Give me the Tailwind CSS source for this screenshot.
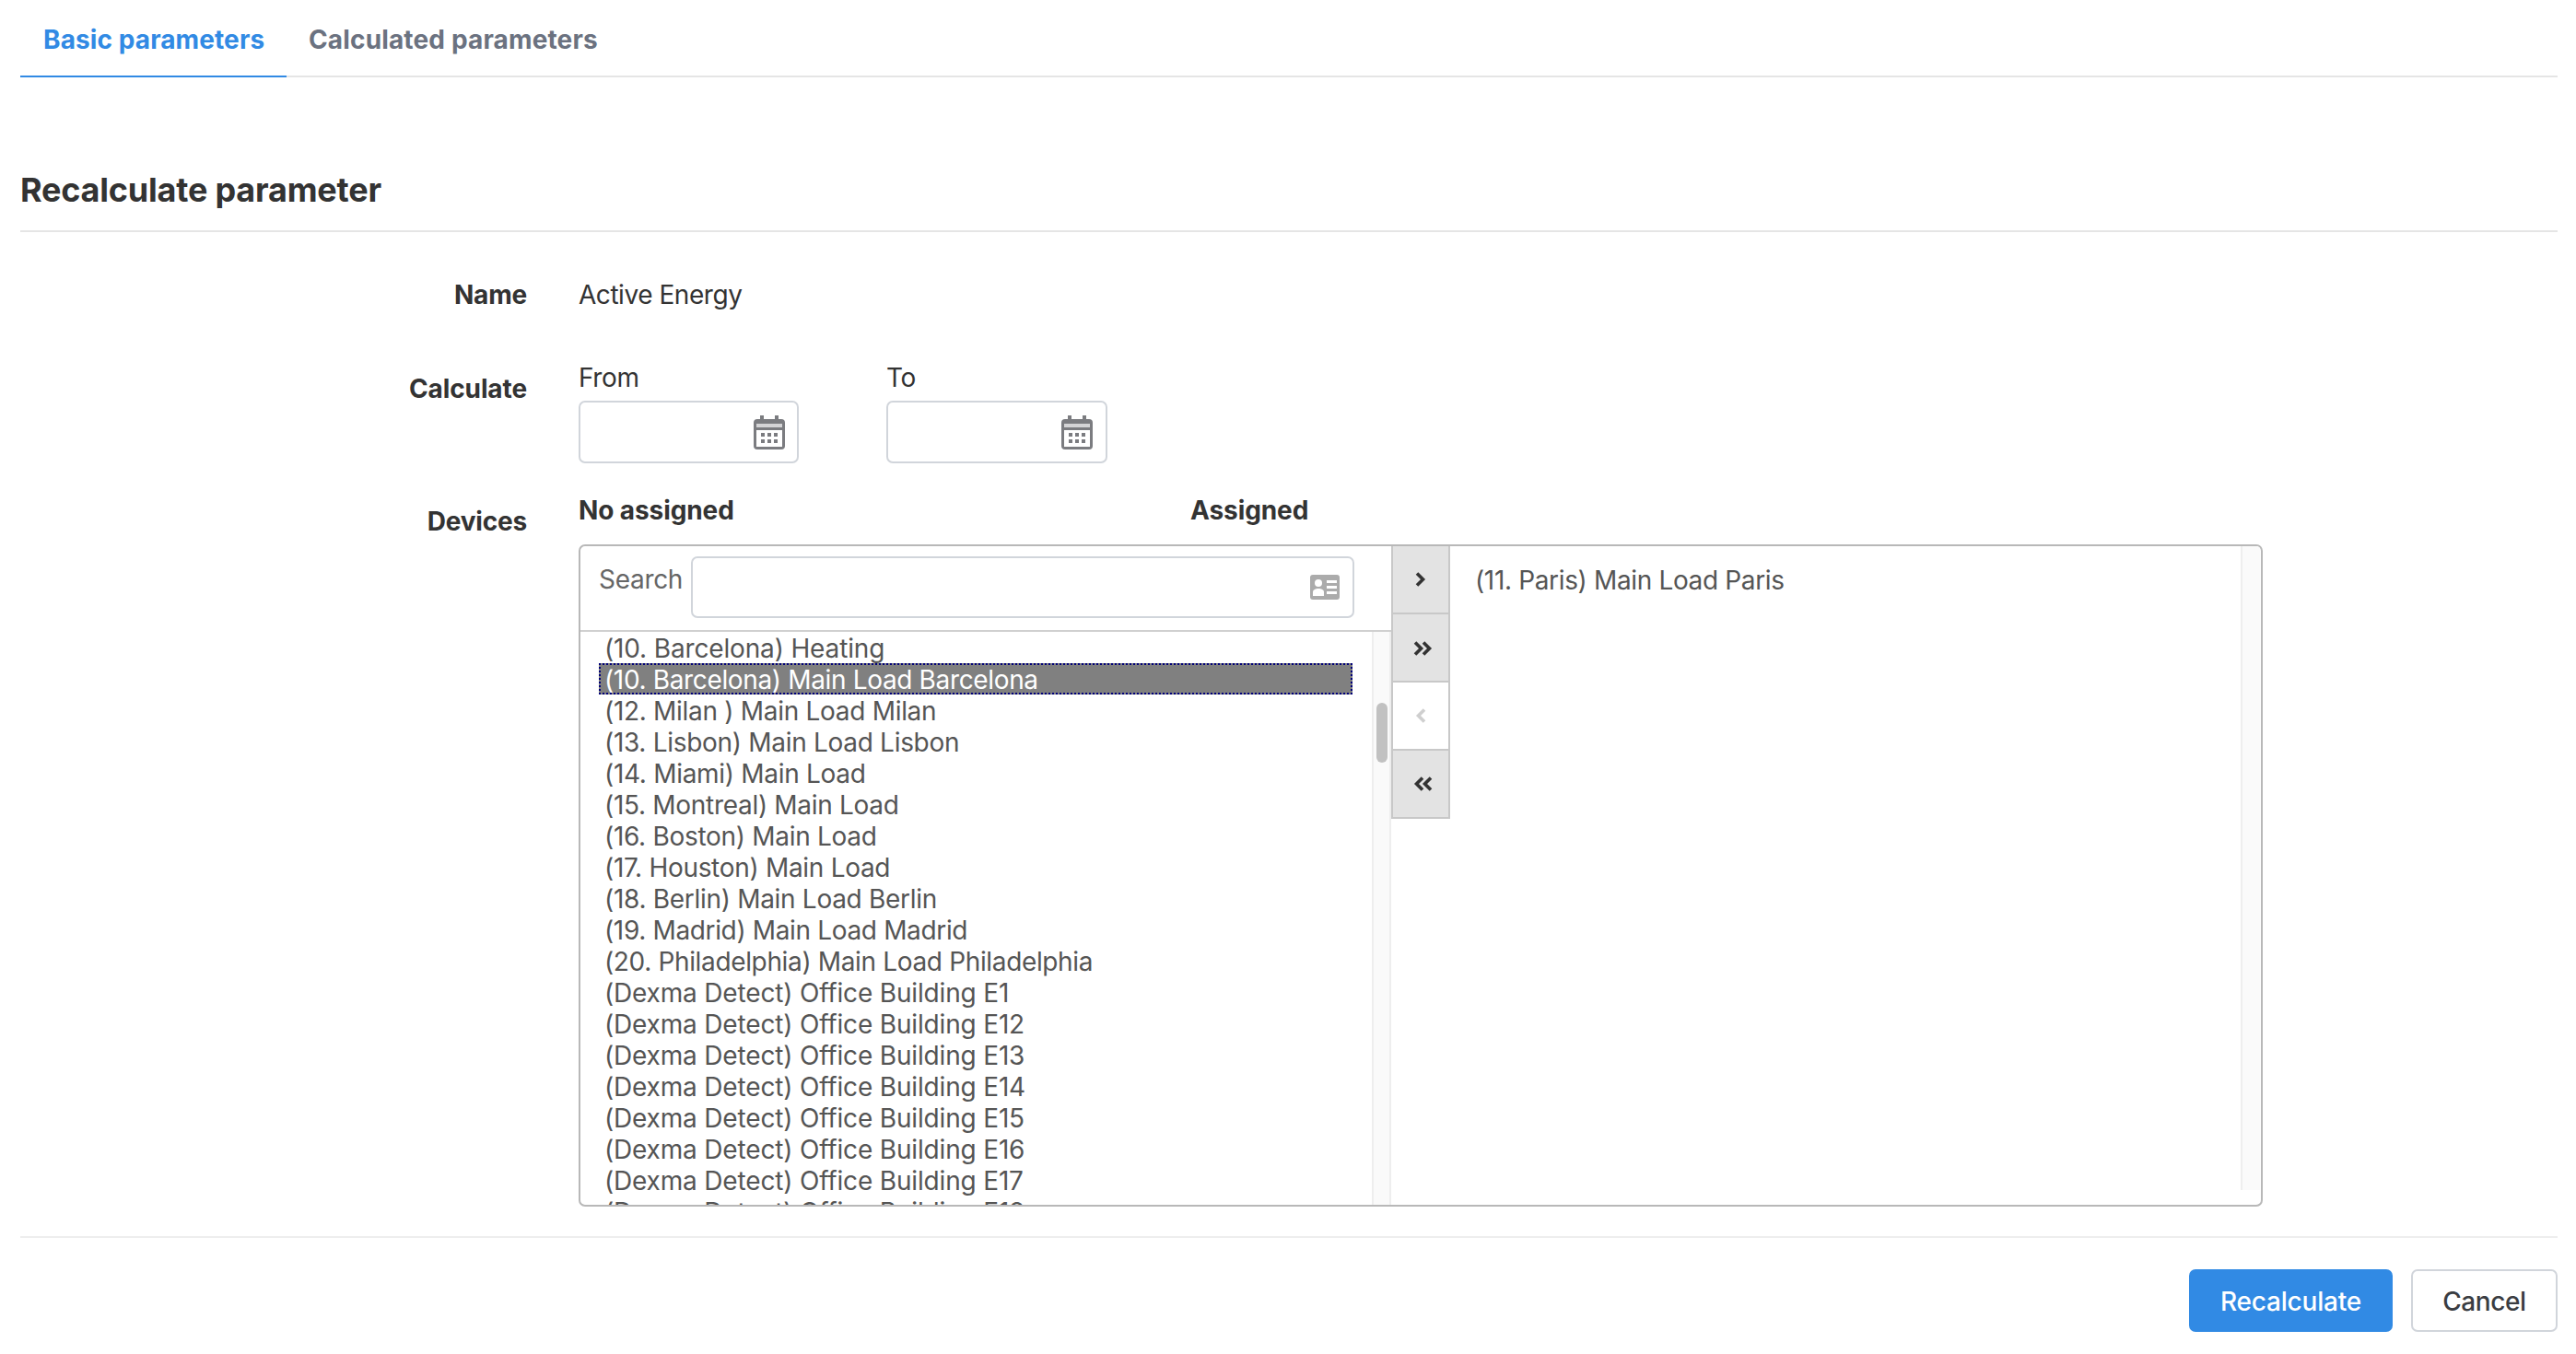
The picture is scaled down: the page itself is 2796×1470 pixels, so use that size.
<!DOCTYPE html>
<html lang="en">
<head>
<meta charset="utf-8">
<title>Recalculate parameter</title>
<script src="https://cdn.jsdelivr.net/npm/@tailwindcss/browser@4"></script>
</head>
<body class="bg-white font-['Inter',sans-serif] text-[#333] text-[28px]">
<div class="w-[2796px] h-[1470px] overflow-hidden px-[20px] flex flex-col">
  <div class="w-[2754px] ml-[2px] h-[84px] border-b-2 border-[#e5e5e5] flex text-[28px] font-bold">
    <div class="h-[84px] w-[289px] border-b-2 border-[#318ae4] text-[#318ae4] pl-[25px] leading-[86px] tracking-[0.1px]">Basic parameters</div>
    <div class="h-[82px] pl-[24px] text-[#6b7280] leading-[86px] tracking-[0.15px]">Calculated parameters</div>
  </div>

  <h2 class="w-[2754px] ml-[2px] mt-[84px] h-[84px] border-b-2 border-[#e5e5e5] text-[36px] font-bold leading-[76px] tracking-[-0.2px]">Recalculate parameter</h2>

  <div class="mt-[48px] flex h-[40px] leading-[40px]">
    <div class="w-[552px] text-right font-bold tracking-[-0.2px]">Name</div>
    <div class="ml-[56px] tracking-[-0.45px]">Active Energy</div>
  </div>

  <div class="mt-[50px] flex">
    <div class="w-[552px] text-right font-bold pt-[12px] leading-[40px] tracking-[-0.1px]">Calculate</div>
    <div class="ml-[56px] flex gap-[95px] tracking-[-0.35px]">
      <div>
        <div class="leading-[40px]">From</div>
        <div class="mt-[5px] w-[239px] h-[68px] border-2 border-[#d1d5db] rounded-[7px] flex items-center justify-end pr-[13px]">
          <svg class="w-[34px] h-[37px]" viewBox="0 0 34 37"><rect x="0" y="4" width="34" height="33" rx="4" fill="#7b7c80"/><rect x="7" y="0" width="4" height="8" fill="#7b7c80"/><rect x="23" y="0" width="4" height="8" fill="#7b7c80"/><rect x="3" y="9" width="28" height="4" fill="#d4d4d6"/><rect x="3" y="16" width="28" height="18" fill="#fff"/><g fill="#7b7c80"><rect x="8" y="19" width="4" height="4"/><rect x="15" y="19" width="4" height="4"/><rect x="22" y="19" width="4" height="4"/><rect x="8" y="26" width="4" height="4"/><rect x="15" y="26" width="4" height="4"/><rect x="22" y="26" width="4" height="4"/></g></svg>
        </div>
      </div>
      <div>
        <div class="leading-[40px]">To</div>
        <div class="mt-[5px] w-[240px] h-[68px] border-2 border-[#d1d5db] rounded-[7px] flex items-center justify-end pr-[14px]">
          <svg class="w-[34px] h-[37px]" viewBox="0 0 34 37"><rect x="0" y="4" width="34" height="33" rx="4" fill="#7b7c80"/><rect x="7" y="0" width="4" height="8" fill="#7b7c80"/><rect x="23" y="0" width="4" height="8" fill="#7b7c80"/><rect x="3" y="9" width="28" height="4" fill="#d4d4d6"/><rect x="3" y="16" width="28" height="18" fill="#fff"/><g fill="#7b7c80"><rect x="8" y="19" width="4" height="4"/><rect x="15" y="19" width="4" height="4"/><rect x="22" y="19" width="4" height="4"/><rect x="8" y="26" width="4" height="4"/><rect x="15" y="26" width="4" height="4"/><rect x="22" y="26" width="4" height="4"/></g></svg>
        </div>
      </div>
    </div>
  </div>

  <div class="mt-[31px] flex">
    <div class="w-[552px] text-right font-bold pt-[12px] leading-[40px] tracking-[-0.2px]">Devices</div>
    <div class="ml-[56px]">
      <div class="flex h-[40px] leading-[40px] font-bold tracking-[-0.1px]">
        <div class="w-[664px]">No assigned</div>
        <div>Assigned</div>
      </div>
      <div class="mt-[17px] w-[1828px] h-[719px] border-2 border-[#b8b8b8] rounded-[7px] flex overflow-hidden text-[#555] tracking-[-0.3px]">
        <div class="w-[880px] flex flex-col">
          <div class="h-[93px] shrink-0 border-b-2 border-[#d0d0d0] flex pl-[20px] pt-[11px]">
            <div class="w-[100px] leading-[50px] text-[#666]">Search</div>
            <div class="w-[720px] h-[67px] border-2 border-[#d1d5db] rounded-[7px] flex items-center justify-end pr-[14px]">
              <svg class="w-[32px] h-[27px]" viewBox="0 0 32 27"><rect width="32" height="27" rx="3" fill="#ababab"/><circle cx="9" cy="9" r="4" fill="#fff"/><path d="M3 23v-4c0-3 3-4 6-4s6 1 6 4v4z" fill="#fff"/><rect x="18" y="6" width="11" height="3" fill="#fff"/><rect x="18" y="12" width="11" height="3" fill="#fff"/><rect x="18" y="18" width="11" height="3" fill="#fff"/></svg>
            </div>
          </div>
          <div class="flex-1 flex min-h-0">
            <div class="flex-1 pl-[20px] overflow-hidden leading-[36px]">
              <div class="w-[818px] h-[34px] px-[6px] tracking-[-0.15px]">(10. Barcelona) Heating</div>
              <div class="w-[818px] h-[34px] px-[4px] bg-[#808080] text-white border-2 border-dotted border-[#00007a] leading-[32px] tracking-[-0.35px]">(10. Barcelona) Main Load Barcelona</div>
              <div class="w-[818px] h-[34px] px-[6px]">(12. Milan ) Main Load Milan</div>
              <div class="w-[818px] h-[34px] px-[6px]">(13. Lisbon) Main Load Lisbon</div>
              <div class="w-[818px] h-[34px] px-[6px]">(14. Miami) Main Load</div>
              <div class="w-[818px] h-[34px] px-[6px]">(15. Montreal) Main Load</div>
              <div class="w-[818px] h-[34px] px-[6px]">(16. Boston) Main Load</div>
              <div class="w-[818px] h-[34px] px-[6px]">(17. Houston) Main Load</div>
              <div class="w-[818px] h-[34px] px-[6px]">(18. Berlin) Main Load Berlin</div>
              <div class="w-[818px] h-[34px] px-[6px] tracking-[-0.35px]">(19. Madrid) Main Load Madrid</div>
              <div class="w-[818px] h-[34px] px-[6px] tracking-[-0.35px]">(20. Philadelphia) Main Load Philadelphia</div>
              <div class="w-[818px] h-[34px] px-[6px] tracking-[-0.17px]">(Dexma Detect) Office Building E1</div>
              <div class="w-[818px] h-[34px] px-[6px] tracking-[-0.17px]">(Dexma Detect) Office Building E12</div>
              <div class="w-[818px] h-[34px] px-[6px] tracking-[-0.17px]">(Dexma Detect) Office Building E13</div>
              <div class="w-[818px] h-[34px] px-[6px] tracking-[-0.17px]">(Dexma Detect) Office Building E14</div>
              <div class="w-[818px] h-[34px] px-[6px] tracking-[-0.17px]">(Dexma Detect) Office Building E15</div>
              <div class="w-[818px] h-[34px] px-[6px] tracking-[-0.17px]">(Dexma Detect) Office Building E16</div>
              <div class="w-[818px] h-[34px] px-[6px] tracking-[-0.17px]">(Dexma Detect) Office Building E17</div>
              <div class="w-[818px] h-[34px] px-[6px] tracking-[-0.17px]">(Dexma Detect) Office Building E18</div>
            </div>
            <div class="w-[21px] shrink-0 border-x-2 border-[#eeeeee] bg-[#fafafa]">
              <div class="mt-[77px] ml-[3px] w-[12px] h-[65px] rounded-full bg-[#c1c1c1]"></div>
            </div>
          </div>
        </div>
        <div class="w-[64px] shrink-0 flex flex-col text-[#333]">
          <div class="h-[74px] border-x-2 border-b-2 border-[#c8c8c8] bg-[#e3e3e3] flex items-center justify-center">
            <svg class="w-[12px] h-[16px]" viewBox="0 0 12 16"><path d="M2 1.5 8.5 8 2 14.5" fill="none" stroke="#333" stroke-width="3.6"/></svg>
          </div>
          <div class="h-[74px] border-x-2 border-b-2 border-[#c8c8c8] bg-[#e3e3e3] flex items-center justify-center pl-[5px] pt-[2px]">
            <svg class="w-[21px] h-[16px]" viewBox="0 0 21 16"><path d="M2 1.5 8.5 8 2 14.5M11 1.5 17.5 8 11 14.5" fill="none" stroke="#333" stroke-width="3.6"/></svg>
          </div>
          <div class="h-[74px] border-x-2 border-b-2 border-[#c8c8c8] bg-white flex items-center justify-center">
            <svg class="w-[12px] h-[16px]" viewBox="0 0 12 16"><path d="M10 1.5 3.5 8 10 14.5" fill="none" stroke="#cfcfcf" stroke-width="3.6"/></svg>
          </div>
          <div class="h-[74px] border-x-2 border-b-2 border-[#c8c8c8] bg-[#e3e3e3] flex items-center justify-center pl-[5px]">
            <svg class="w-[21px] h-[16px]" viewBox="0 0 21 16"><path d="M10 1.5 3.5 8 10 14.5M19 1.5 12.5 8 19 14.5" fill="none" stroke="#333" stroke-width="3.6"/></svg>
          </div>
        </div>
        <div class="flex-1 flex items-start">
          <div class="flex-1 pl-[27px] pt-[20px] leading-[34px] tracking-[-0.35px]">(11. Paris) Main Load Paris</div>
          <div class="w-[21px] h-[699px] mr-[1px] border-l-2 border-[#eeeeee] bg-[#fafafa]"></div>
        </div>
      </div>
    </div>
  </div>

  <div class="w-[2754px] ml-[2px] mt-[32px] border-t-2 border-[#eeeeee]"></div>
  <div class="w-[2754px] ml-[2px] mt-[34px] flex justify-end gap-[20px] font-medium">
    <div class="w-[221px] h-[68px] rounded-[7px] bg-[#318ae4] text-white flex items-center justify-center pt-[2px] tracking-[-0.2px]">Recalculate</div>
    <div class="w-[159px] h-[68px] rounded-[7px] border-2 border-[#d1d5db] text-[#3a3d42] flex items-center justify-center pt-[2px] tracking-[-0.4px]">Cancel</div>
  </div>
</div>
</body>
</html>
